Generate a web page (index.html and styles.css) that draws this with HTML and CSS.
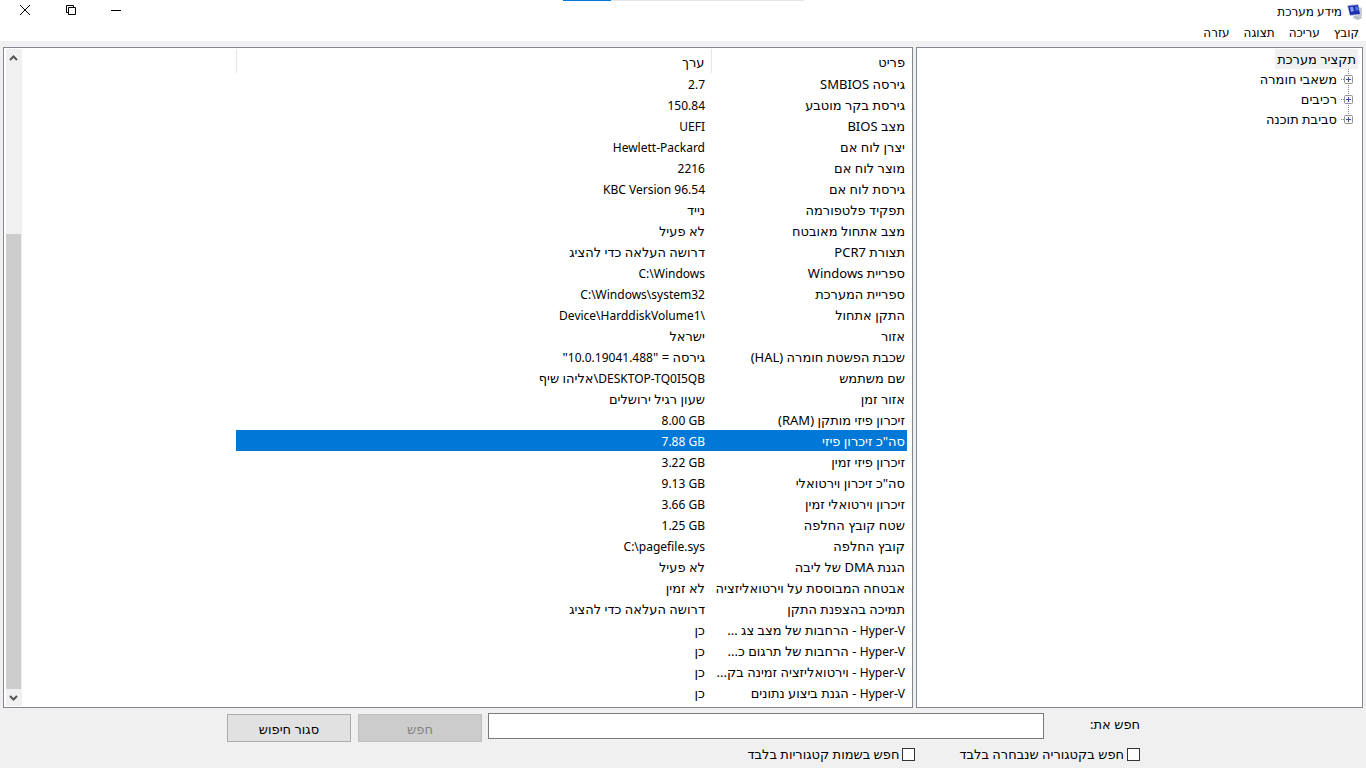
FILE: index.html
```html
<!DOCTYPE html>
<html lang="he" dir="rtl">
<head>
<meta charset="utf-8">
<title>מידע מערכת</title>
<link rel="stylesheet" href="styles.css">
</head>
<body>
<div class="progress"></div>
<header class="titlebar">
  <svg class="app-icon" width="16" height="16" viewBox="0 0 16 16" aria-hidden="true">
    <path d="M7 12l6-1 2 3-4 2-5-2z" fill="#b9bcc4"/>
    <path d="M12 3l3 1v8l-3 2z" fill="#c9ccd3"/>
    <path d="M0 1l11-1 3 11-11 1z" fill="#c3c9dc"/>
    <path d="M1 2l10-1 2 9-10 1z" fill="#1c2fb0"/>
    <path d="M3 3h3l1 4-3 1z" fill="#7fa0ee"/>
    <path d="M8 3l2-1 2 4-3 1z" fill="#4e74dd"/>
  </svg>
  <h1 class="title">מידע מערכת</h1>
  <div class="window-buttons">
    <button class="win-btn" type="button" aria-label="מזער"><svg width="12" height="12" viewBox="0 0 12 12"><path d="M0 6.500h10" stroke="#000" fill="none"/></svg></button>
    <button class="win-btn" type="button" aria-label="שחזר"><svg width="12" height="12" viewBox="0 0 12 12"><path d="M3.500 8.500h-2v-7h7v2M3.500 3.500h7v7h-7z" stroke="#000" fill="none"/></svg></button>
    <button class="win-btn" type="button" aria-label="סגור"><svg width="12" height="12" viewBox="0 0 12 12"><path d="M1 1l10 10M11 1L1 11" stroke="#000" fill="none"/></svg></button>
  </div>
</header>
<nav class="menu">
  <button type="button">קובץ</button>
  <button type="button">עריכה</button>
  <button type="button">תצוגה</button>
  <button type="button">עזרה</button>
</nav>
<main class="panes">
  <section class="pane tree">
    <button class="node root" type="button">תקציר מערכת</button>
    <ul class="branches">
      <li><button class="node" type="button"><svg class="plus" width="9" height="9" viewBox="0 0 9 9"><rect x=".5" y=".5" width="8" height="8" rx="1" fill="#f8f8f8" stroke="#919191"/><path d="M2 4.500h5M4.500 2v5" stroke="#3c4f9c"/></svg><span class="dots"></span>משאבי חומרה</button></li>
      <li><button class="node" type="button"><svg class="plus" width="9" height="9" viewBox="0 0 9 9"><rect x=".5" y=".5" width="8" height="8" rx="1" fill="#f8f8f8" stroke="#919191"/><path d="M2 4.500h5M4.500 2v5" stroke="#3c4f9c"/></svg><span class="dots"></span>רכיבים</button></li>
      <li><button class="node" type="button"><svg class="plus" width="9" height="9" viewBox="0 0 9 9"><rect x=".5" y=".5" width="8" height="8" rx="1" fill="#f8f8f8" stroke="#919191"/><path d="M2 4.500h5M4.500 2v5" stroke="#3c4f9c"/></svg><span class="dots"></span>סביבת תוכנה</button></li>
    </ul>
  </section>
  <section class="pane list">
    <div class="table-area">
      <table class="details">
        <colgroup><col class="col-item"><col class="col-value"></colgroup>
        <thead><tr><th scope="col">פריט</th><th scope="col">ערך</th></tr></thead>
        <tbody>
          <tr><td>גירסה SMBIOS</td><td><bdi>2.7</bdi></td></tr>
          <tr><td>גירסת בקר מוטבע</td><td><bdi>150.84</bdi></td></tr>
          <tr><td>מצב BIOS</td><td><bdi>UEFI</bdi></td></tr>
          <tr><td>יצרן לוח אם</td><td><bdi>Hewlett-Packard</bdi></td></tr>
          <tr><td>מוצר לוח אם</td><td><bdi>2216</bdi></td></tr>
          <tr><td>גירסת לוח אם</td><td><bdi>KBC Version 96.54</bdi></td></tr>
          <tr><td>תפקיד פלטפורמה</td><td>נייד</td></tr>
          <tr><td>מצב אתחול מאובטח</td><td>לא פעיל</td></tr>
          <tr><td>תצורת PCR7</td><td>דרושה העלאה כדי להציג</td></tr>
          <tr><td>ספריית Windows</td><td><bdi>C:\Windows</bdi></td></tr>
          <tr><td>ספריית המערכת</td><td><bdi>C:\Windows\system32</bdi></td></tr>
          <tr><td>התקן אתחול</td><td><bdi dir="rtl">\Device\HarddiskVolume1</bdi></td></tr>
          <tr><td>אזור</td><td>ישראל</td></tr>
          <tr><td>שכבת הפשטת חומרה (HAL)</td><td>גירסה = "<bdi>10.0.19041.488</bdi>"</td></tr>
          <tr><td>שם משתמש</td><td><bdi>DESKTOP-TQ0I5QB</bdi>\אליהו שיף</td></tr>
          <tr><td>אזור זמן</td><td>שעון רגיל ירושלים</td></tr>
          <tr><td>זיכרון פיזי מותקן (RAM)</td><td><bdi>8.00 GB</bdi></td></tr>
          <tr class="selected"><td>סה"כ זיכרון פיזי</td><td><bdi>7.88 GB</bdi></td></tr>
          <tr><td>זיכרון פיזי זמין</td><td><bdi>3.22 GB</bdi></td></tr>
          <tr><td>סה"כ זיכרון וירטואלי</td><td><bdi>9.13 GB</bdi></td></tr>
          <tr><td>זיכרון וירטואלי זמין</td><td><bdi>3.66 GB</bdi></td></tr>
          <tr><td>שטח קובץ החלפה</td><td><bdi>1.25 GB</bdi></td></tr>
          <tr><td>קובץ החלפה</td><td><bdi>C:\pagefile.sys</bdi></td></tr>
          <tr><td>הגנת DMA של ליבה</td><td>לא פעיל</td></tr>
          <tr><td>אבטחה המבוססת על וירטואליזציה</td><td>לא זמין</td></tr>
          <tr><td>תמיכה בהצפנת התקן</td><td>דרושה העלאה כדי להציג</td></tr>
          <tr><td><bdi>Hyper-V</bdi> - הרחבות של מצב צג ...</td><td>כן</td></tr>
          <tr><td><bdi>Hyper-V</bdi> - הרחבות של תרגום כ...</td><td>כן</td></tr>
          <tr><td><bdi>Hyper-V</bdi> - וירטואליזציה זמינה בק...</td><td>כן</td></tr>
          <tr><td><bdi>Hyper-V</bdi> - הגנת ביצוע נתונים</td><td>כן</td></tr>
        </tbody>
      </table>
    </div>
    <div class="scrollbar">
      <button class="arrow" type="button" aria-label="גלול למעלה"><svg width="9" height="8" viewBox="0 0 9 8"><path d="M1 6l3.500-3.500L8 6" stroke="#555" stroke-width="2" fill="none"/></svg></button>
      <div class="track"><div class="thumb"></div></div>
      <button class="arrow" type="button" aria-label="גלול למטה"><svg width="9" height="8" viewBox="0 0 9 8"><path d="M1 2l3.500 3.500L8 2" stroke="#555" stroke-width="2" fill="none"/></svg></button>
    </div>
  </section>
</main>
<form class="search">
  <div class="search-row">
    <label class="search-label" for="query">חפש את:</label>
    <input class="query" id="query" type="text">
    <button class="push" type="button" disabled>חפש</button>
    <button class="push" type="button">סגור חיפוש</button>
  </div>
  <div class="options">
    <label class="option"><input type="checkbox">חפש בקטגוריה שנבחרה בלבד</label>
    <label class="option"><input type="checkbox">חפש בשמות קטגוריות בלבד</label>
  </div>
</form>
</body>
</html>
```
FILE: styles.css
```css
* { box-sizing: border-box; }

body {
  margin: 0;
  min-height: 100vh;
  display: flex;
  flex-direction: column;
  background: #f0f0f0;
  color: #000;
  font: 13px/20px "Noto Sans", "DejaVu Sans", sans-serif;
}

button, input { font: inherit; color: inherit; }

button {
  margin: 0;
  padding: 0;
  border: 0;
  background: none;
}

.progress {
  position: absolute;
  top: 0;
  left: 563px;
  width: 241px;
  height: 1px;
  background: linear-gradient(to right, #0078d7 48px, #e5e5e5 48px);
}

.titlebar {
  display: flex;
  align-items: center;
  height: 23px;
  padding-right: 3px;
  background: #fff;
}

.title {
  margin: 0 5px 0 0;
  font-size: 12px;
  font-weight: 400;
}

.window-buttons {
  display: flex;
  align-self: flex-start;
  margin-right: auto;
  padding-left: 2px;
}

.win-btn {
  display: flex;
  align-items: center;
  justify-content: center;
  width: 46px;
  height: 20px;
}

.menu {
  display: flex;
  gap: 14px;
  height: 18px;
  padding: 1px 7px 0 0;
  background: #fff;
  font-size: 12px;
  line-height: 18px;
}

.panes {
  flex: 1;
  display: grid;
  grid-template-columns: 447fr 910fr;
  gap: 3px;
  padding: 6px 3px 0;
}

.pane {
  border: 1px solid #828790;
  background: #fff;
}

.tree { padding: 1px 4px; }

.node {
  display: flex;
  align-items: center;
  height: 20px;
}

.root {
  padding: 0 2px;
  background: #f0f0f0;
}

.branches {
  margin: 0 5px 0 0;
  padding: 0;
  list-style: none;
}

.branches li {
  background: repeating-linear-gradient(#808080 0 1px, transparent 1px 2px) right 4px top / 1px 100% no-repeat;
}

.branches li:last-child { background-size: 1px 10px; }

.dots {
  width: 3px;
  margin-left: 4px;
  border-top: 1px dotted #808080;
}

.list {
  display: flex;
  padding: 1px 5px 1px 2px;
}

.table-area { flex: 1; }

.details {
  table-layout: fixed;
  width: 671px;
  border-collapse: collapse;
  line-height: 19px;
}

.col-item { width: 196px; }
.col-value { width: 475px; }

.details th, .details td {
  height: 21px;
  padding: 2px 6px 0 0;
  text-align: right;
  font-weight: 400;
  white-space: nowrap;
}

.details th { height: 24px; border-left: 1px solid #e5e5e5; }

.details th:first-child, .details td:first-child { padding-right: 2px; }

.details bdi { font-size: 12px; }

.selected { background: #0078d7; color: #fff; }

.scrollbar {
  display: flex;
  flex-direction: column;
  width: 16px;
  padding-right: 1px;
  background: #f0f0f0;
}

.arrow {
  display: flex;
  align-items: center;
  justify-content: center;
  height: 17px;
}

.track {
  flex: 1;
  display: flex;
  flex-direction: column;
  justify-content: flex-end;
}

.thumb { height: 73%; background: #cdcdcd; }

.search {
  height: 60px;
  padding: 5px 226px 0 227px;
}

.search-row {
  display: flex;
  align-items: flex-start;
}

.search-label { width: 96px; line-height: 23px; }

.query {
  flex: 1;
  min-width: 0;
  height: 26px;
  margin-left: 6px;
  border: 1px solid #7a7a7a;
  background: #fff;
}

.push {
  width: 124px;
  height: 28px;
  margin-top: 1px;
  padding-top: 1px;
  border: 1px solid #adadad;
  background: #e1e1e1;
}

.push + .push { margin-right: 7px; }

.push:disabled {
  border-color: #bfbfbf;
  background: #ccc;
  color: #838383;
}

.options { display: flex; gap: 44px; margin-top: 2px; }

.option { display: flex; align-items: center; gap: 3px; }

.option input {
  appearance: none;
  width: 13px;
  height: 13px;
  margin: 0;
  border: 1px solid #333;
  background: #fff;
}
```
